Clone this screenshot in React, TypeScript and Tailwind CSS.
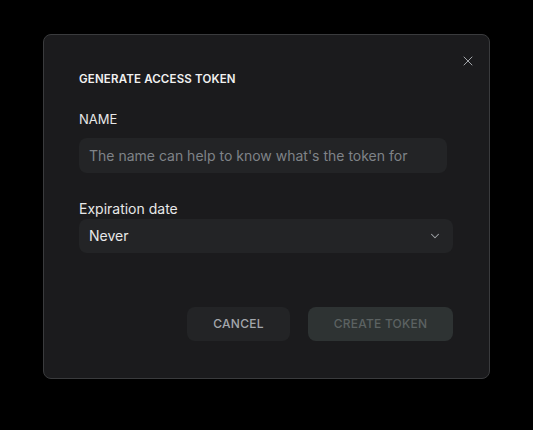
import { X, ChevronDown } from "lucide-react"

const App = () => {
  return (
    <div className="flex h-[430px] w-[533px] items-start bg-black pl-[43px] pt-[34px] font-['Inter',sans-serif]">
      <div className="relative flex h-[345px] w-[447px] flex-col rounded-lg border border-[#3a3b3d] bg-[#1b1b1d] px-[35px] pt-[36px]">
        <button className="absolute right-[13px] top-[18px] text-[#a3a6aa]" aria-label="Close">
          <X size={16} strokeWidth={1.5} />
        </button>
        <h2 className="text-[11.5px] font-semibold tracking-[0.015em] text-[#f1f1f1]">GENERATE ACCESS TOKEN</h2>

        <label className="mt-[22px] text-[13px] text-[#e8e8e8]">NAME</label>
        <div className="mt-[8px] flex h-[35px] w-[368px] items-center rounded-lg bg-[#232426] px-[10px]">
          <span className="text-[14px] text-[#7f8388]">The name can help to know what's the token for</span>
        </div>

        <label className="mt-[25px] text-[14px] text-[#e8e8e8]">Expiration date</label>
        <div className="flex h-[34px] w-[374px] items-center justify-between rounded-lg bg-[#232426] pl-[10px] pr-[11px]">
          <span className="text-[14px] text-[#e8e8e8]">Never</span>
          <ChevronDown size={14} strokeWidth={1.8} className="text-[#a3a6aa]" />
        </div>

        <div className="mt-[54px] flex w-[374px] justify-end gap-[18px]">
          <button className="h-[34px] w-[103px] rounded-lg bg-[#232426] text-[12px] font-medium tracking-[0.02em] text-[#a3a7ac]">
            CANCEL
          </button>
          <button className="h-[34px] w-[145px] rounded-lg bg-[#2e3333] text-[12px] font-medium tracking-[0.02em] text-[#5c6262]">
            CREATE TOKEN
          </button>
        </div>
      </div>
    </div>
  )
}

export default App
